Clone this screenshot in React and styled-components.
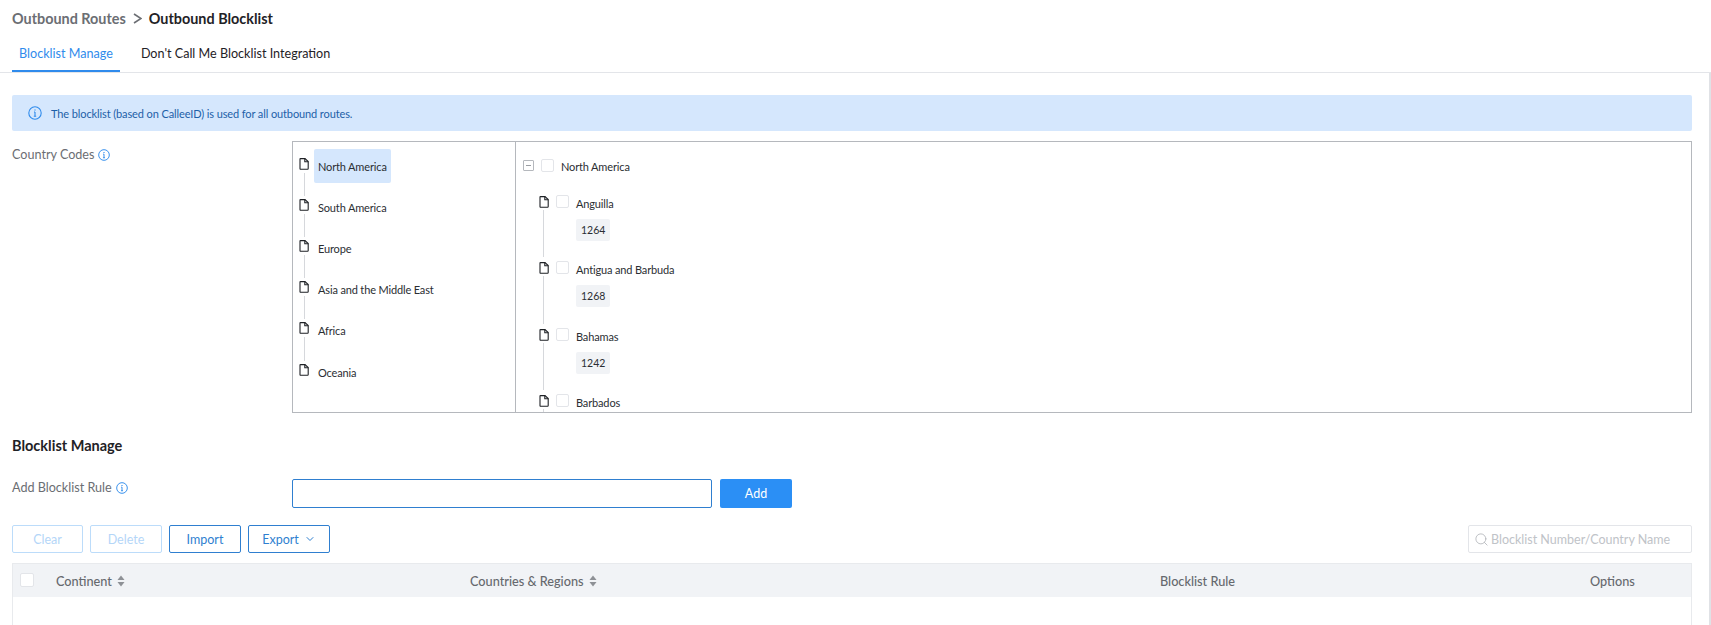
import React from "react";
import styled, {createGlobalStyle} from "styled-components";
import {ChevronDown, Search} from "lucide-react";

const GlobalStyle = createGlobalStyle`
    html, body {
        margin: 0;
        height: 625px;
        overflow: hidden;
        background: #fff;
        font-family: Lato, "Liberation Sans", sans-serif;
    }
`;

const Page = styled.div`
    width: 1711px;
    height: 625px;
    overflow: hidden;
    display: flex;
    flex-direction: column;
`;

const Breadcrumb = styled.div`
    display: flex;
    align-items: center;
    gap: 7px;
    height: 36px;
    padding-left: 12px;
    font-size: 14.4px;
    font-weight: 700;
    color: #6b6e73;
`;

const Current = styled.span`
    color: #1f2226;
`;

const Tabs = styled.div`
    display: flex;
    height: 36px;
    padding-left: 12px;
    gap: 14px;
    border-bottom: 1px solid #e3e5e9;
`;

const Tab = styled.div`
    height: 36px;
    box-sizing: border-box;
    padding: 9px 7px 0 7px;
    font-size: 12.6px;
    line-height: 17px;
    color: ${props => props.$active ? "#2f8bec" : "#1f2226"};
    border-bottom: ${props => props.$active ? "2px solid #2f8bec" : "none"};
`;

const Content = styled.div`
    flex: 1;
    display: flex;
    flex-direction: column;
    padding: 22px 17px 0 12px;
    border-right: 2px solid #e0e2e6;
`;

const Alert = styled.div`
    display: flex;
    align-items: center;
    gap: 9px;
    height: 36px;
    padding-left: 16px;
    border-radius: 2px;
    background: #d5e7fd;
    color: #1d5fa8;
    font-size: 11px;
    letter-spacing: -0.11px;
`;

const Row = styled.div`
    display: flex;
    margin-top: ${props => props.$top || 0}px;
`;

const Label = styled.div`
    width: 280px;
    flex-shrink: 0;
    display: flex;
    align-items: center;
    align-self: flex-start;
    gap: 4px;
    font-size: 12.6px;
    line-height: 16px;
    color: #6b6e73;
    padding-top: ${props => props.$top || 0}px;
`;

const TreeBox = styled.div`
    flex: 1;
    display: flex;
    height: 272px;
    box-sizing: border-box;
    border: 1px solid #b5b8bd;
    overflow: hidden;
`;

const LeftTree = styled.div`
    width: 223px;
    flex-shrink: 0;
    box-sizing: border-box;
    border-right: 1px solid #b5b8bd;
    padding: 7px 0 0 6px;
`;

const RightTree = styled.div`
    flex: 1;
    padding: 7px 0 0 7px;
    overflow: hidden;
`;

const LeftNode = styled.div`
    position: relative;
    display: flex;
    align-items: flex-start;
    height: ${props => props.$height || 41}px;
`;

const Line = styled.div`
    position: absolute;
    left: 5px;
    top: 24px;
    bottom: -6px;
    border-left: 1px solid #d6d8dc;
`;

const IconSlot = styled.span`
    width: ${props => props.$width || 15}px;
    height: 20px;
    flex-shrink: 0;
    display: flex;
    align-items: flex-start;
    padding-top: ${props => props.$top || 0}px;
    box-sizing: border-box;
`;

const LeftTitle = styled.div`
    height: 34px;
    padding: 0 4px;
    border-radius: 2px;
    display: flex;
    align-items: center;
    font-size: 11px;
    letter-spacing: -0.15px;
    color: #2b2e33;
    background: ${props => props.$selected ? "#d5e7fd" : "transparent"};
`;

const RootRow = styled.div`
    display: flex;
    align-items: center;
    height: 34px;
    margin-bottom: 11px;
    font-size: 11px;
    letter-spacing: -0.15px;
    color: #2b2e33;
`;

const Expander = styled.span`
    width: 9px;
    height: 9px;
    border: 1px solid #b5b8bd;
    border-radius: 1px;
    display: flex;
    align-items: center;
    justify-content: center;
    margin: -2px 7px 0 0;
    &::before {
        content: "";
        width: 5px;
        height: 1px;
        background: #9a9da2;
    }
`;

const Check = styled.span`
    display: block;
    box-sizing: border-box;
    width: ${props => props.$size || 13}px;
    height: ${props => props.$size || 13}px;
    flex-shrink: 0;
    border: 1px solid #e3e5e9;
    border-radius: 2px;
    background: #fff;
    margin-top: ${props => props.$top || 0}px;
`;

const RootTitle = styled.span`
    margin-left: 7px;
`;

const CountryNode = styled.div`
    position: relative;
    height: ${props => props.$height}px;
    padding-left: 16px;
`;

const CountryLine = styled.div`
    position: absolute;
    left: 20px;
    top: 16px;
    bottom: 3px;
    border-left: 1px solid #d6d8dc;
`;

const CountryRow = styled.div`
    display: flex;
    align-items: flex-start;
    height: 20px;
    font-size: 11px;
    letter-spacing: -0.15px;
    line-height: 20px;
    color: #2b2e33;
`;

const CountryTitle = styled.span`
    margin-left: 7px;
`;

const CodeTag = styled.div`
    display: inline-flex;
    align-items: center;
    height: 22px;
    margin: 5px 0 0 37px;
    padding: 0 5px;
    border-radius: 2px;
    background: #f1f3f6;
    font-size: 10.5px;
    color: #2b2e33;
`;

const SectionTitle = styled.div`
    margin-top: 24px;
    font-size: 14.5px;
    line-height: 17px;
    font-weight: 700;
    color: #1f2226;
`;

const RuleInput = styled.div`
    width: 420px;
    height: 29px;
    box-sizing: border-box;
    border: 1px solid #2f7fd0;
    border-radius: 2px;
`;

const PrimaryButton = styled.button`
    width: 72px;
    height: 29px;
    margin-left: 8px;
    border: none;
    border-radius: 2px;
    background: #2b8ff5;
    color: #fff;
    font: 400 12.5px Lato, sans-serif;
`;

const Toolbar = styled.div`
    display: flex;
    gap: 7px;
    margin-top: 17px;
`;

const OutlineButton = styled.button`
    width: ${props => props.$width || 72}px;
    height: 28px;
    box-sizing: border-box;
    display: flex;
    align-items: center;
    justify-content: center;
    gap: 5px;
    border-radius: 2px;
    background: #fff;
    border: 1px solid ${props => props.disabled ? "#bcdcfa" : "#2f7fd0"};
    color: ${props => props.disabled ? "#b4d6f8" : "#2f7fd0"};
    font: 400 12.5px Lato, sans-serif;
`;

const SearchBox = styled.div`
    margin-left: auto;
    width: 224px;
    height: 28px;
    box-sizing: border-box;
    display: flex;
    align-items: center;
    gap: 2px;
    padding-left: 5px;
    border: 1px solid #e3e5e9;
    border-radius: 2px;
    font-size: 12.5px;
    color: #c0c3c8;
`;

const Table = styled.div`
    margin-top: 10px;
    flex: 1;
    box-sizing: border-box;
    border: 1px solid #e8eaed;
    border-bottom: none;
`;

const HeaderRow = styled.div`
    display: grid;
    grid-template-columns: 43px 414px 690px 430px 1fr;
    align-items: center;
    height: 33px;
    background: #f1f3f6;
    font-size: 12.7px;
    font-weight: 500;
    color: #66696e;
`;

const HeaderCell = styled.div`
    display: flex;
    align-items: center;
    gap: 5px;
`;

const CheckCell = styled.div`
    padding: 0 0 2px 7px;
`;

const InfoIcon = ({size = 12, color = "#2f8bec"}) => (
    <svg width={size} height={size} viewBox="0 0 14 14" fill="none" stroke={color} strokeWidth="1.1">
        <circle cx="7" cy="7" r="6.2"/>
        <path d="M7 6v4.2M5.8 10.2h2.4M6 6h1"/>
        <path d="M7 3.6v1" strokeWidth="1.3"/>
    </svg>
);

const FileIcon = () => (
    <svg width="10" height="12" viewBox="0 0 10 12" fill="none" stroke="#1f2226" strokeWidth="1.1">
        <path d="M1 1.2C1 .8 1.2.6 1.6.6H6L9.2 3.6V10.6C9.2 11 9 11.3 8.6 11.3H1.6C1.2 11.3 1 11 1 10.6Z"/>
        <path d="M5.8.6V3.8H9.2"/>
    </svg>
);

const SortIcon = () => (
    <svg width="8" height="12" viewBox="0 0 8 12" fill="#8e9196">
        <path d="M4 0.5 7.5 5H.5Z"/>
        <path d="M4 11.5 .5 7H7.5Z"/>
    </svg>
);

const CrumbArrow = () => (
    <svg width="9" height="11" viewBox="0 0 9 11" fill="none" stroke="#6b6e73" strokeWidth="1.6">
        <path d="M1 1 8 5.5 1 10"/>
    </svg>
);

const continents = [
    {name: "North America", selected: true, height: 41},
    {name: "South America", height: 41},
    {name: "Europe", height: 41},
    {name: "Asia and the Middle East", height: 41},
    {name: "Africa", height: 42},
    {name: "Oceania", last: true},
];

const countries = [
    {name: "Anguilla", code: "1264", height: 66},
    {name: "Antigua and Barbuda", code: "1268", height: 67},
    {name: "Bahamas", code: "1242", height: 66},
    {name: "Barbados", height: 66},
];

const App = () => {
    return(
        <Page>
            <GlobalStyle/>
            <Breadcrumb>
                Outbound Routes
                <CrumbArrow/>
                <Current>Outbound Blocklist</Current>
            </Breadcrumb>
            <Tabs>
                <Tab $active>Blocklist Manage</Tab>
                <Tab>Don't Call Me Blocklist Integration</Tab>
            </Tabs>
            <Content>
                <Alert>
                    <InfoIcon size={14}/>
                    The blocklist (based on CalleeID) is used for all outbound routes.
                </Alert>
                <Row $top={10}>
                    <Label $top={6}>Country Codes <InfoIcon/></Label>
                    <TreeBox>
                        <LeftTree>
                            {continents.map(item => (
                                <LeftNode key={item.name} $height={item.height}>
                                    <IconSlot $top={9}><FileIcon/></IconSlot>
                                    {!item.last && <Line/>}
                                    <LeftTitle $selected={item.selected}>{item.name}</LeftTitle>
                                </LeftNode>
                            ))}
                        </LeftTree>
                        <RightTree>
                            <RootRow>
                                <Expander/>
                                <Check $top={-2}/>
                                <RootTitle>North America</RootTitle>
                            </RootRow>
                            {countries.map(item => (
                                <CountryNode key={item.name} $height={item.height}>
                                    <CountryLine/>
                                    <CountryRow>
                                        <IconSlot $width={17} $top={2}><FileIcon/></IconSlot>
                                        <Check $top={1}/>
                                        <CountryTitle>{item.name}</CountryTitle>
                                    </CountryRow>
                                    {item.code && <CodeTag>{item.code}</CodeTag>}
                                </CountryNode>
                            ))}
                        </RightTree>
                    </TreeBox>
                </Row>
                <SectionTitle>Blocklist Manage</SectionTitle>
                <Row $top={25}>
                    <Label $top={1}>Add Blocklist Rule <InfoIcon/></Label>
                    <RuleInput/>
                    <PrimaryButton>Add</PrimaryButton>
                </Row>
                <Toolbar>
                    <OutlineButton disabled $width={71}>Clear</OutlineButton>
                    <OutlineButton disabled>Delete</OutlineButton>
                    <OutlineButton>Import</OutlineButton>
                    <OutlineButton $width={82}>Export <ChevronDown size={12}/></OutlineButton>
                    <SearchBox>
                        <Search size={15} strokeWidth={1.2} color="#a9acb1"/>
                        Blocklist Number/Country Name
                    </SearchBox>
                </Toolbar>
                <Table>
                    <HeaderRow>
                        <CheckCell><Check $size={14}/></CheckCell>
                        <HeaderCell>Continent <SortIcon/></HeaderCell>
                        <HeaderCell>Countries &amp; Regions <SortIcon/></HeaderCell>
                        <HeaderCell>Blocklist Rule</HeaderCell>
                        <HeaderCell>Options</HeaderCell>
                    </HeaderRow>
                </Table>
            </Content>
        </Page>
    )
};

export default App
